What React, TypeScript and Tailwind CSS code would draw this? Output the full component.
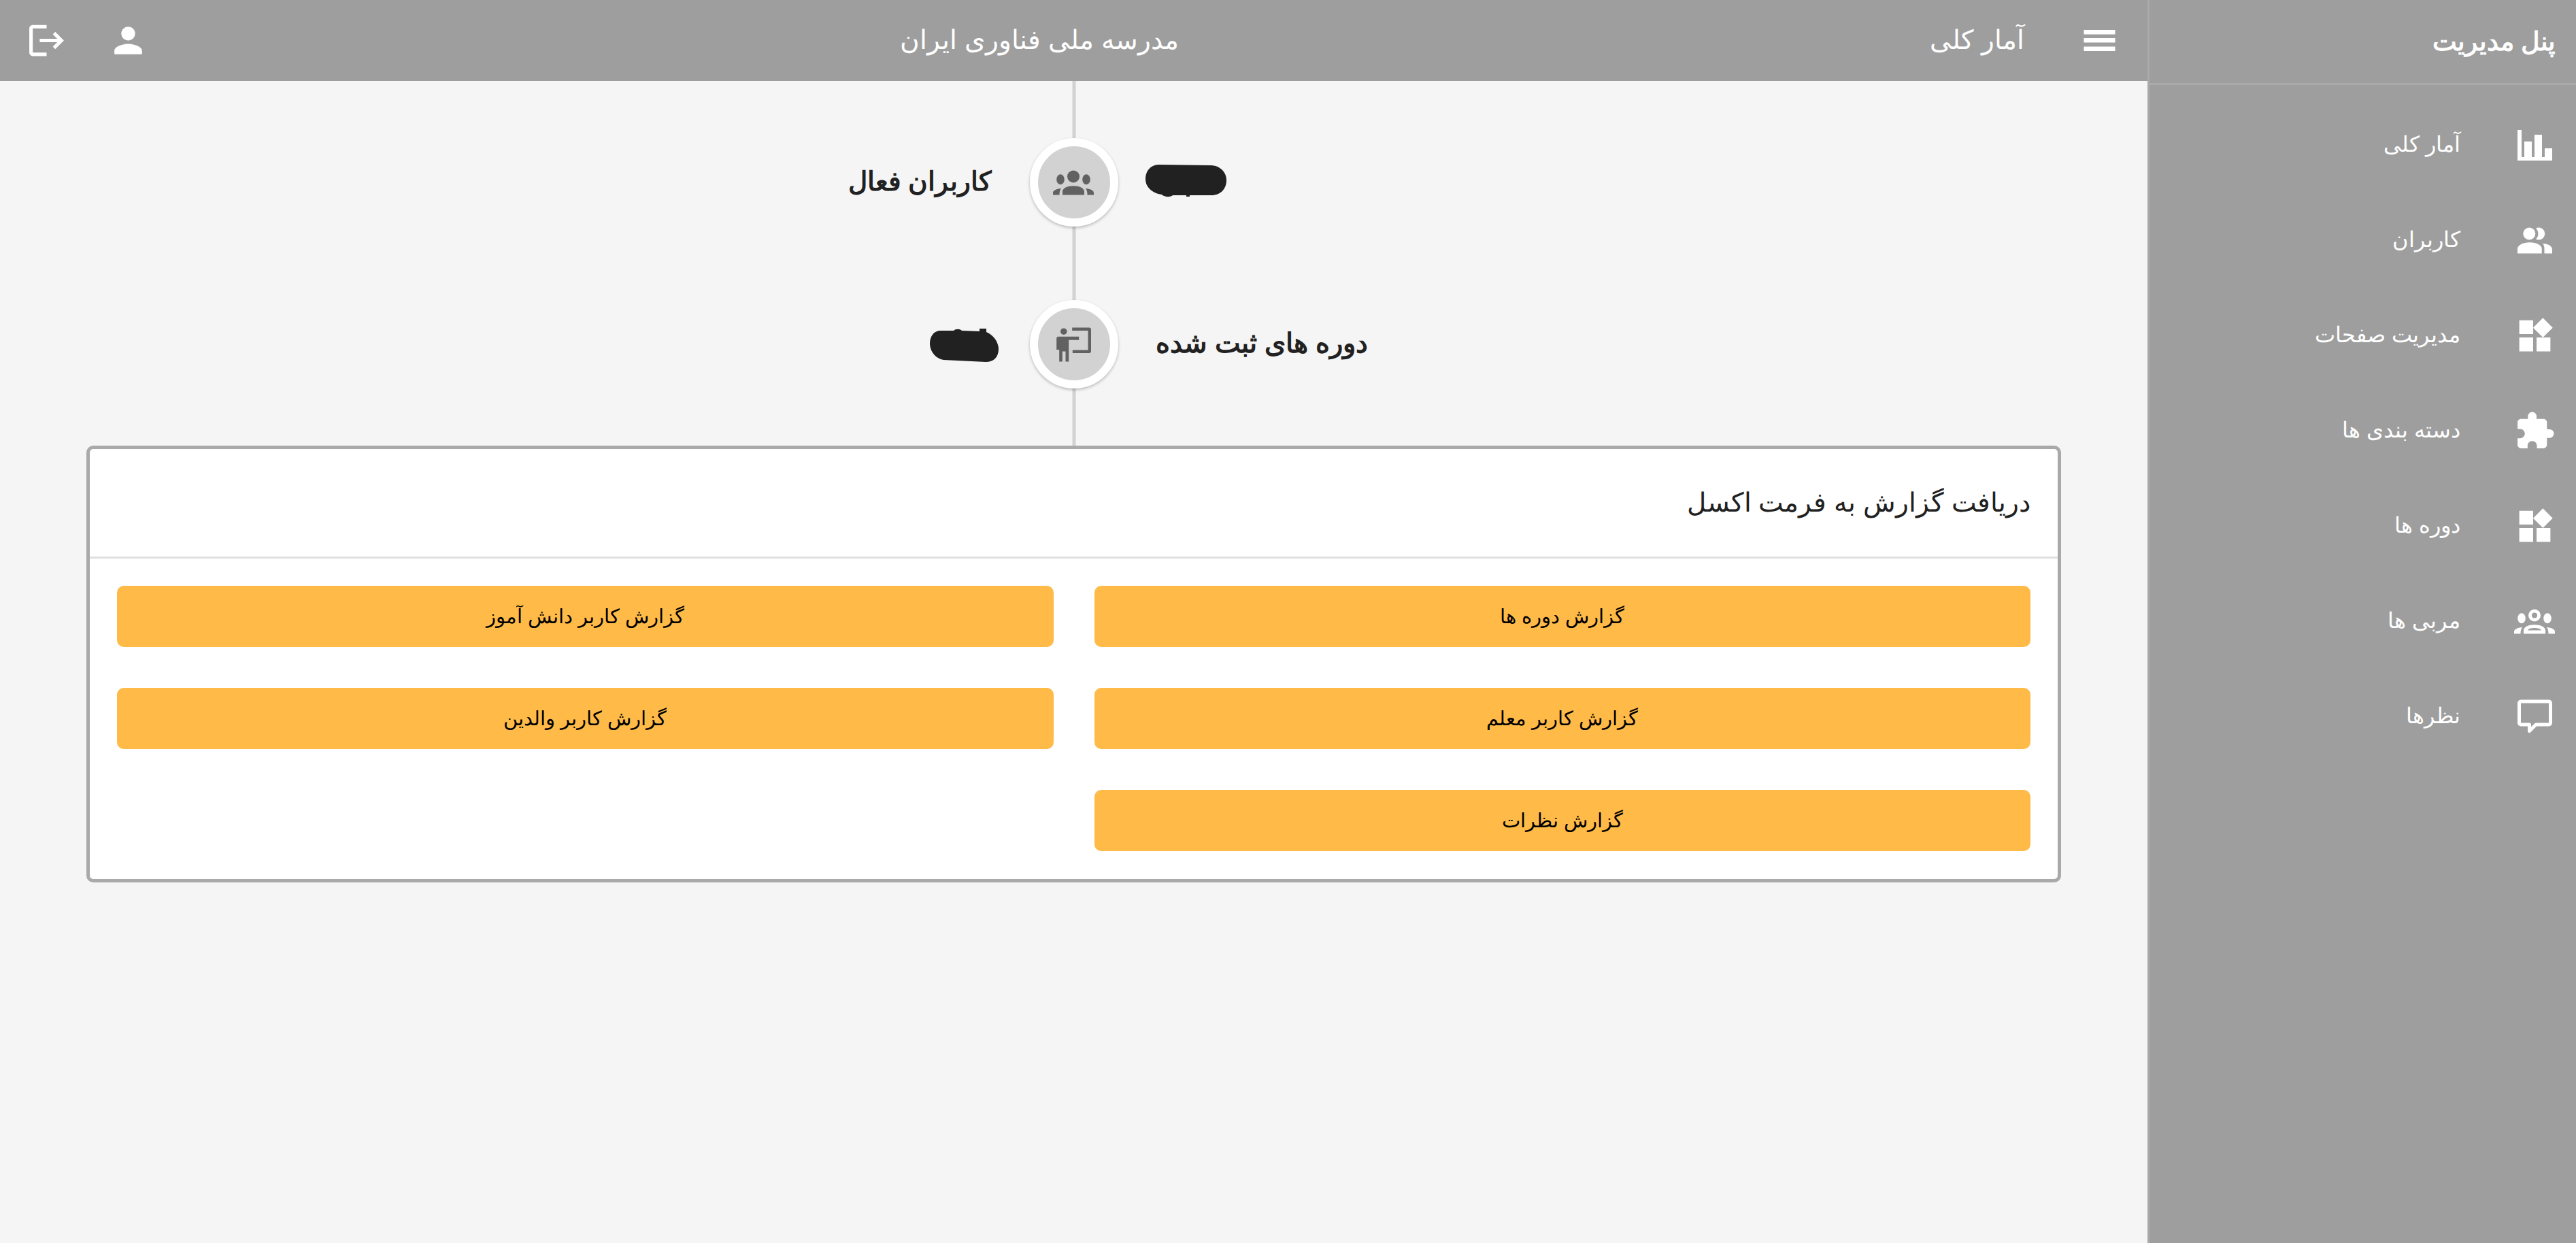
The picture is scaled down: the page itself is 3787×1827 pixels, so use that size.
import { MdPerson, MdLogout, MdExtension, MdWidgets } from "react-icons/md";
import type { ComponentType } from "react";

const font = { fontFamily: '"Liberation Sans", Arial, sans-serif' };

type IconProps = { className?: string };

function MenuIcon({ className }: IconProps) {
  return (
    <svg className={className} viewBox="0 0 61 61" fill="currentColor" aria-hidden>
      <path d="M7.5 15h46v6.5h-46zM7.5 27h46v6.5h-46zM7.5 39.5h46v6.5h-46z" />
    </svg>
  );
}

function BarsIcon({ className }: IconProps) {
  return (
    <svg className={className} viewBox="-5 -8 61 61" fill="currentColor" aria-hidden>
      <path d="M0 0h6v40h45v5H0z" />
      <path d="M10 17h11v23H10zM25 7h11v33H25zM40 27h11v13H40z" />
    </svg>
  );
}

function PeopleIcon({ className }: IconProps) {
  return (
    <svg className={className} viewBox="-5 -11.5 61 61" fill="currentColor" aria-hidden>
      <circle cx="17.3" cy="9" r="9" />
      <path d="M27 1A9 9 0 1 1 27 17A11 11 0 0 0 27 1Z" />
      <path d="M0 38V31C0 26 8 21.7 18 21.7C28 21.7 35.7 26 35.7 31V38Z" />
      <path d="M37 23.5C45 24 51 27 51 32V38H39.5V32C39.5 28 39 25.5 37 23.5Z" />
    </svg>
  );
}

function GroupsIcon({ className }: IconProps) {
  return (
    <svg className={className} viewBox="0 -12.5 61 61" fill="currentColor" aria-hidden>
      <circle cx="30" cy="9" r="9" />
      <ellipse cx="11" cy="13.3" rx="5.8" ry="7.5" />
      <ellipse cx="49" cy="13.3" rx="5.8" ry="7.5" />
      <path d="M14 36V31C14 26 21 22.7 30 22.7C39 22.7 46 26 46 31V36Z" />
      <path d="M0 36V33C0 29.5 5 27 12 26.5C10 29 9.5 32 9.5 36Z" />
      <path d="M60 36V33C60 29.5 55 27 48 26.5C50 29 50.5 32 50.5 36Z" />
    </svg>
  );
}

function GroupsOutlineIcon({ className }: IconProps) {
  return (
    <svg className={className} viewBox="0 -12.5 61 61" fill="currentColor" aria-hidden>
      <path
        fillRule="evenodd"
        d="M30 0A9 9 0 1 1 30 18A9 9 0 1 1 30 0ZM30 5A4 4 0 1 0 30 13A4 4 0 1 0 30 5ZM14 36V31C14 26 21 22.7 30 22.7C39 22.7 46 26 46 31V36ZM20 31H40C39 28.5 35 27.5 30 27.5C25 27.5 21 28.5 20 31Z"
      />
      <ellipse cx="11" cy="13.3" rx="5.8" ry="7.5" />
      <ellipse cx="49" cy="13.3" rx="5.8" ry="7.5" />
      <path d="M0 36V33C0 29.5 5 27 12 26.5C10 29 9.5 32 9.5 36Z" />
      <path d="M60 36V33C60 29.5 55 27 48 26.5C50 29 50.5 32 50.5 36Z" />
    </svg>
  );
}

function CommentIcon({ className }: IconProps) {
  return (
    <svg className={className} viewBox="-5 -5.5 61 61" fill="none" stroke="currentColor" strokeWidth={5} strokeLinejoin="round" aria-hidden>
      <path d="M5 2.5H46A2.5 2.5 0 0 1 48.5 5V34A2.5 2.5 0 0 1 46 36.5H27L17.5 46V36.5H5A2.5 2.5 0 0 1 2.5 34V5A2.5 2.5 0 0 1 5 2.5Z" />
    </svg>
  );
}

function TeacherIcon({ className }: IconProps) {
  return (
    <svg className={className} viewBox="0 0 61 61" fill="currentColor" aria-hidden>
      <circle cx="15.8" cy="11.2" r="4.8" />
      <path d="M8 18.8H38.2V23.8H23.2V55.5H18.5V40.5H13.8V55.5H9.2V38H5.2V21.6A2.8 2.8 0 0 1 8 18.8Z" />
      <path d="M28.2 5.5H53A3 3 0 0 1 56 8.5V40A3 3 0 0 1 53 43H28.8V38.6H51.5V10H28.2Z" />
    </svg>
  );
}

const navItems: { label: string; icon: ComponentType<IconProps> }[] = [
  { label: "آمار کلی", icon: BarsIcon },
  { label: "کاربران", icon: PeopleIcon },
  { label: "مدیریت صفحات", icon: MdWidgets },
  { label: "دسته بندی ها", icon: MdExtension },
  { label: "دوره ها", icon: MdWidgets },
  { label: "مربی ها", icon: GroupsOutlineIcon },
  { label: "نظرها", icon: CommentIcon },
];

const reports = [
  "گزارش دوره ها",
  "گزارش کاربر دانش آموز",
  "گزارش کاربر معلم",
  "گزارش کاربر والدین",
  "گزارش نظرات",
];

const circle =
  "relative z-10 flex h-[130px] w-[130px] items-center justify-center rounded-full border-[12px] border-white bg-[#d2d2d2] text-[#616161] shadow-[0_2px_4px_rgba(0,0,0,0.25)]";

export default function App() {
  return (
    <div dir="rtl" style={font} className="flex h-[1827px] w-full overflow-hidden bg-[#f5f5f5] text-[#212121]">
      {/* sidebar */}
      <aside className="flex h-full w-[630px] shrink-0 flex-col border-l-[3px] border-[#aaaaaa] bg-[#9e9e9e] text-white">
        <div className="flex h-[125px] items-center border-b-[3px] border-[#aaaaaa] pr-[30px] text-[37.5px] font-bold">
          پنل مدیریت
        </div>
        <nav className="flex flex-col py-[18px]">
          {navItems.map((item) => (
            <div key={item.label} className="flex h-[140px] items-center pr-[30px]">
              <item.icon className="h-[61px] w-[61px] shrink-0" />
              <span className="mr-[79px] text-[31.5px]">{item.label}</span>
            </div>
          ))}
        </nav>
      </aside>

      <div className="flex min-w-0 flex-1 flex-col">
        {/* top bar */}
        <header className="flex h-[119px] shrink-0 items-center justify-between bg-[#9e9e9e] pl-[38px] pr-[40px] text-white">
          <div className="flex items-center">
            <MenuIcon className="h-[61px] w-[61px]" />
            <span className="mr-[80px] text-[39px]">آمار کلی</span>
          </div>
          <span className="text-[39px]">مدرسه ملی فناوری ایران</span>
          <div className="flex items-center gap-[59px]">
            <MdPerson className="h-[61px] w-[61px]" />
            <MdLogout className="h-[61px] w-[61px]" />
          </div>
        </header>

        <main className="flex flex-col px-[127px]">
          {/* timeline */}
          <div dir="ltr" className="relative h-[536px] pt-[84px]">
            <div className="absolute inset-y-0 left-1/2 w-[5px] -translate-x-1/2 bg-[#d2d2d2]" />
            <div className="grid grid-cols-[1fr_130px_1fr] gap-y-[108px]">
              <div className="flex items-center justify-end pr-[55px]">
                <span dir="rtl" className="-mt-[4px] text-[39.3px] font-bold">کاربران فعال</span>
              </div>
              <div className={circle}>
                <GroupsIcon className="h-[61px] w-[61px]" />
              </div>
              <div className="flex items-center pl-[40px]">
                <svg className="-mt-[4px]" width="120" height="48" viewBox="0 0 120 48" aria-hidden>
                  <path fill="#212121" d="M20 0L97 1C111 2 119 12 119 23C119 36 110 45 97 45H65V47H60V45H40C37 48 28 48 24 44C10 42 0 33 0 21C0 9 8 0 20 0Z" />
                </svg>
              </div>

              <div className="flex items-center justify-end pr-[45px]">
                <svg className="mt-[4px]" width="102" height="50" viewBox="0 0 102 50" aria-hidden>
                  <path fill="#212121" d="M16 3H35C38 0 44 0 47 3L73 4V0H83V5C94 10 101 20 101 30C101 42 94 49 82 49L20 46C8 44 0 33 0 22C0 11 6 3 16 3Z" />
                </svg>
              </div>
              <div className={circle}>
                <TeacherIcon className="h-[61px] w-[61px]" />
              </div>
              <div className="flex items-center pl-[55px]">
                <span dir="rtl" className="-mt-[4px] text-[40px] font-bold">دوره های ثبت شده</span>
              </div>
            </div>
          </div>

          {/* report card */}
          <section className="flex h-[642px] flex-col rounded-[10px] border-[5px] border-[#a9a9a9] bg-white">
            <h2 className="flex h-[161px] shrink-0 items-center border-b-[3px] border-[#e0e0e0] pr-[40px] text-[39px] font-normal">
              دریافت گزارش به فرمت اکسل
            </h2>
            <div className="grid grid-cols-2 gap-x-[60px] gap-y-[60px] p-[40px]">
              {reports.map((r) => (
                <button key={r} className="h-[90px] rounded-[10px] bg-[#ffba47] text-[28.5px] text-black">
                  {r}
                </button>
              ))}
            </div>
          </section>
        </main>
      </div>
    </div>
  );
}
